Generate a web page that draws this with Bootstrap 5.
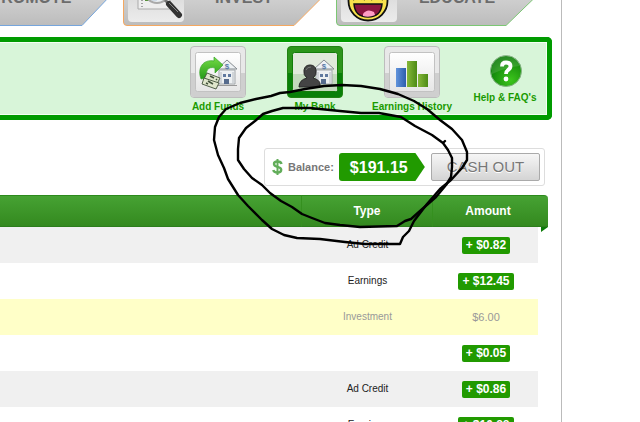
<!DOCTYPE html>
<html lang="en">
<head>
<meta charset="utf-8">
<meta name="viewport" content="width=device-width, initial-scale=1">
<title>My Bank</title>
<link href="https://cdn.jsdelivr.net/npm/bootstrap@5.3.0/dist/css/bootstrap.min.css" rel="stylesheet">
<script src="https://cdn.jsdelivr.net/npm/bootstrap@5.3.0/dist/js/bootstrap.bundle.min.js" defer></script>
<style>
body{font-family:"Liberation Sans",Arial,sans-serif;font-size:10px;color:#222;background:#fff;overflow:hidden}
a{text-decoration:none}
.page-wrap{margin-right:78px;border-right:1px solid #bbb;min-height:100vh;padding-right:9px;overflow:hidden}
.tabs-strip{height:26px;gap:12px;padding-right:15px;overflow:hidden}
.main-tab{flex:none;width:201px;height:60px;padding:0 20px 4px 5px;position:relative;color:#6c6c6c;font-size:16px;font-weight:700;line-height:20px}
.tab-shape{position:absolute;left:0;top:0;width:100%;height:100%}
.tab-pic{position:relative;width:56px;height:52px;border-radius:4px;background:linear-gradient(#ccc,#ececec);overflow:hidden}
.tab-text{position:relative;margin-bottom:14px}
.tool-panel{margin-top:11px;height:83px;border:5px solid #009b00;border-left:0;border-radius:0 5px 5px 0;background:#d8f5d9;box-shadow:inset -1px 1px #f4fff4,inset 0 -1px #f4fff4;padding-top:4px;gap:5px}
.tool-link{flex:none;width:92px;color:#1a9a00;font-weight:700;line-height:12px;text-align:center;white-space:nowrap}
.tool-link:last-child{width:84px;padding-top:8px}
.tool-link:last-child svg{margin-bottom:4px}
.tool-link svg{display:block;margin:0 auto 3px}
.balance-box{width:281px;margin:28px 7px 9px auto;height:38px;border:1px solid #ddd;border-radius:3px;padding:0 4px 0 7px}
.balance-name{font-size:11px;font-weight:700;color:#777;margin:0 5px}
.balance-tag{width:86px;height:28px;padding-left:11px;background:#219a00;color:#fff;font-size:16px;font-weight:700;line-height:29px;border-radius:3px;clip-path:polygon(0 0,89% 0,100% 50%,89% 100%,0 100%)}
.cash-btn{width:109px;height:28px;padding:0;border:1px solid #aaa;border-radius:2px;background:linear-gradient(#f6f6f6,#d4d4d4);color:#777;font-size:15px;line-height:26px;text-shadow:0 1px #fff}
.ledger-wrap{position:relative;margin-right:4px}
.ledger-wrap::after{content:"";position:absolute;right:0;top:32px;width:7px;height:5px;background:#0b7a08;clip-path:polygon(0 0,100% 0,0 100%)}
.ledger{width:100%;table-layout:fixed;border-collapse:separate;border-spacing:0;text-align:center}
.ledger th{height:32px;background:linear-gradient(#46a233,#34891f);border-top:1px solid #2c8a1c;border-bottom:1px solid #2c7d1c;color:#fff;font-size:12px;padding:0;vertical-align:middle}
.ledger th+th{border-left:1px solid #35901f}
.ledger th:last-child{border-top-right-radius:4px;padding-right:5px}
.ledger td{height:36px;padding:0 0 0 2px;line-height:14px;vertical-align:middle}
.ledger .shade td:not(:last-child){background:#f0f0f0}
.ledger .pending td:not(:last-child){background:#ffffc8;color:#999}
.ledger .pending td:nth-child(3){font-size:11px}
.col-kind{width:131px}.col-sum{width:106px}.col-edge{width:10px}
.sum-tag{display:inline-block;padding:0 4px;background:#219a00;color:#fff;border-radius:2px;font-size:12px;font-weight:700;line-height:17px}
.pen-mark{position:absolute;right:170px;top:80px;pointer-events:none}
</style>
</head>
<body>
<div class="page-wrap">
<nav class="tabs-strip d-flex justify-content-end align-items-end">
  <a href="#" class="main-tab d-flex align-items-end">
    <svg class="tab-shape" viewBox="0 0 201 60"><defs><linearGradient id="tg" x1="0" y1="0" x2="0" y2="1"><stop offset="0" stop-color="#ddd"/><stop offset=".55" stop-color="#cfcfcf"/><stop offset="1" stop-color="#bcbcbc"/></linearGradient></defs><path d="M.5.5H200.5V29.500L172 59.500H4Q.5 59.500.5 56Z" fill="url(#tg)" stroke="#76a5dc"/></svg>
    <span class="tab-pic"></span><span class="tab-text flex-fill text-center">PROMOTE</span></a>
  <a href="#" class="main-tab d-flex align-items-end">
    <svg class="tab-shape" viewBox="0 0 201 60"><path d="M.5.5H200.500V30L171 59.500H4Q.5 59.500.5 56Z" fill="url(#tg)" stroke="#f5a860"/></svg>
    <span class="tab-pic"><svg width="56" height="52" viewBox="0 0 56 52"><path d="M10 8H42V39H10Z" fill="#eee" stroke="#aaa"/><path d="M14 30v8" stroke="#555" stroke-dasharray="1 2"/><path d="M17 28h6v3h-6Z" fill="#57903a"/><path d="M24 25h5v6h-5Z" fill="#476fa8"/><circle cx="29" cy="21" r="12" fill="#e9eef2" fill-opacity=".85" stroke="#aaa" stroke-width="2"/><path d="M37 30l4 4" stroke="#777" stroke-width="3"/><path d="M41 34L51 45" stroke="#333" stroke-width="6" stroke-linecap="round"/><path d="M41 33L50 42" stroke="#888" stroke-width="1"/></svg></span><span class="tab-text flex-fill text-center">INVEST</span></a>
  <a href="#" class="main-tab d-flex align-items-end">
    <svg class="tab-shape" viewBox="0 0 201 60"><path d="M.5.5H200.500V30L170 59.500H4Q.5 59.500.5 56Z" fill="url(#tg)" stroke="#7cc774"/></svg>
    <span class="tab-pic"><svg width="56" height="52" viewBox="0 0 56 52"><circle cx="27" cy="31" r="19.500" fill="#f7e04b" stroke="#111" stroke-width="1.800"/><path d="M12 30q6-4 12 0M30 30q6-4 12 0" fill="none" stroke="#111" stroke-width="1.500"/><path d="M13 34H41Q40 47 27 47Q14 47 13 34Z" fill="#8c1540" stroke="#111" stroke-width="1.500"/><path d="M22 44Q26 38 33 42L34 45Q28 48 22 46Z" fill="#ff9dc4"/></svg></span><span class="tab-text flex-fill text-center">EDUCATE</span></a>
</nav>

<nav class="tool-panel d-flex justify-content-end">
  <a href="#" class="tool-link"><svg width="56" height="52" viewBox="0 0 56 52">
    <defs><linearGradient id="wg" x1="0" y1="0" x2="0" y2="1"><stop offset="0" stop-color="#fff"/><stop offset="1" stop-color="#e6e6e6"/></linearGradient>
    <linearGradient id="gg" x1="0" y1="0" x2="0" y2="1"><stop offset="0" stop-color="#75dc46"/><stop offset="1" stop-color="#259a18"/></linearGradient>
    <g id="bank"><path d="M27 23L37 14L47 23Z" fill="#eef1f4" stroke="#858b90"/><path d="M29 24H45V38H29Z" fill="#edf0f2" stroke="#a1a6aa"/><path d="M31 26v11M43 26v11" stroke="#b5bac0"/><path d="M33 28h3v3h-3ZM38 28h3v3h-3Z" fill="#60799f"/><path d="M34 33h5v5h-5Z" fill="#566b8d"/><path d="M27 39.500H47" stroke="#999"/><text x="37" y="23" font-size="8" font-weight="700" text-anchor="middle" fill="#5a7ba8">$</text></g></defs>
    <rect x=".5" y=".5" width="55" height="51" rx="3.500" fill="#e8e8e8" stroke="#bdbdbd"/><path d="M1 27H55V48Q55 51 52 51H4Q1 51 1 48Z" fill="#cfcfcf"/><rect x="5.500" y="6.500" width="45" height="39" rx="2" fill="url(#wg)" stroke="#c2c2c2"/><use href="#bank"/>
    <path d="M11 33C7 22 13 13 24 15L24 11L33 19L25 27V22C18 20 15 25 17 32Z" fill="url(#gg)" stroke="#35a526" stroke-width=".7"/>
    <g stroke="#42513b" stroke-width=".9" fill="#dfe6cc"><path d="M17 27L30 32L27 38L14 33Z"/><path d="M14 32L29 37L26 43L12 38Z"/></g><path d="M20 30l4 2M18 35l5 3M16 37l2 1M26 33l1 1" stroke="#42513b" stroke-width="1.500"/></svg>Add Funds</a>
  <a href="#" class="tool-link"><svg width="56" height="52" viewBox="0 0 56 52">
    <rect x=".5" y=".5" width="55" height="51" rx="3.500" fill="#2c951b" stroke="#218213"/><path d="M1 27H55V48Q55 51 52 51H4Q1 51 1 48Z" fill="#087f08"/><rect x="5.500" y="6.500" width="45" height="39" rx="2" fill="#e0eadb" stroke="#137c0a"/><path d="M6 28H50V45H6Z" fill="#c3dabd"/><use href="#bank"/>
    <path d="M12 41Q12 34 20 32Q16 29 17 24Q18 19 23 19Q28 19 29 24Q30 29 26 32Q33 34 33 38V41Z" fill="#444" stroke="#292929"/><path d="M19 24Q20 21 24 21" fill="none" stroke="#777"/></svg>My Bank</a>
  <a href="#" class="tool-link"><svg width="56" height="52" viewBox="0 0 56 52">
    <defs><linearGradient id="bg1"><stop offset="0" stop-color="#6294dc"/><stop offset="1" stop-color="#2d5ead"/></linearGradient><linearGradient id="bg2"><stop offset="0" stop-color="#86b83a"/><stop offset="1" stop-color="#4d8b15"/></linearGradient></defs>
    <rect x=".5" y=".5" width="55" height="51" rx="3.500" fill="#e8e8e8" stroke="#bdbdbd"/><path d="M1 27H55V48Q55 51 52 51H4Q1 51 1 48Z" fill="#cfcfcf"/><rect x="5.500" y="6.500" width="45" height="39" rx="2" fill="url(#wg)" stroke="#c2c2c2"/>
    <path d="M12 22h10v19H12Z" fill="url(#bg1)"/><path d="M23 15h10v26H23Z" fill="url(#bg2)"/><path d="M34 28h10v13H34Z" fill="url(#bg2)"/></svg>Earnings History</a>
  <a href="#" class="tool-link"><svg width="34" height="34" viewBox="0 0 34 34">
    <defs><radialGradient id="hg" cx=".65" cy=".8" r=".75"><stop offset="0" stop-color="#3cc51c"/><stop offset="1" stop-color="#0c7d08"/></radialGradient></defs>
    <circle cx="18" cy="17" r="15.500" fill="url(#hg)" stroke="#86b386"/><path d="M4 16A14 14 0 0 1 32 12Q18 13 4 20Z" fill="#fff" fill-opacity=".12"/><path d="M14 12.500Q14 8.500 18 8.500Q22.500 8.500 22.500 12Q22.500 14.500 20 16Q18 17.500 18 20" fill="none" stroke="#fff" stroke-width="3.800"/><circle cx="18" cy="25" r="2.400" fill="#fff"/></svg>Help &amp; FAQ's</a>
</nav>

<section class="balance-box d-flex align-items-center">
  <svg width="11" height="16" viewBox="0 0 11 16"><path d="M5.500 0V16" stroke="#62ad5a" stroke-width="2"/><path d="M9.500 5Q9 2.500 5.500 2.500Q2 2.500 2 5Q2 7 5.500 7.800Q9.200 8.700 9.200 10.800Q9.200 13.500 5.500 13.500Q1.800 13.500 1.300 11" fill="none" stroke="#62ad5a" stroke-width="2.400"/></svg>
  <span class="balance-name">Balance:</span>
  <span class="balance-tag">$191.15</span>
  <button type="button" class="btn cash-btn ms-auto">CASH OUT</button>
</section>

<div class="ledger-wrap">
<table class="ledger">
  <colgroup><col><col class="col-kind"><col class="col-sum"><col class="col-edge"></colgroup>
  <thead><tr><th></th><th scope="col">Type</th><th scope="col" colspan="2">Amount</th></tr></thead>
  <tbody>
    <tr class="shade"><td></td><td>Ad Credit</td><td><span class="sum-tag">+ $0.82</span></td><td></td></tr>
    <tr><td></td><td>Earnings</td><td><span class="sum-tag">+ $12.45</span></td><td></td></tr>
    <tr class="pending"><td></td><td>Investment</td><td>$6.00</td><td></td></tr>
    <tr><td></td><td></td><td><span class="sum-tag">+ $0.05</span></td><td></td></tr>
    <tr class="shade"><td></td><td>Ad Credit</td><td><span class="sum-tag">+ $0.86</span></td><td></td></tr>
    <tr><td></td><td>Earnings</td><td><span class="sum-tag">+ $10.88</span></td><td></td></tr>
  </tbody>
</table>
</div>
</div>
<svg class="pen-mark" width="260" height="170" viewBox="210 80 260 170" fill="none" stroke="#000" stroke-width="2.400" stroke-linejoin="round" stroke-linecap="round">
<path d="M445 141L443 143L432 135L415 126L401 117L379 113L361 113L340 111L310 108H283L272 111L263 114L255 121L246 128L239 138L238 149V160L244 169L252 178L262 185L270 193L281 201L292 207L302 214L312 218L325 223L340 225L360 227L397 226L405 221L411 219L420 211L436 197L446 185L451 177L452 167V158L448 150L443 143"/>
<path d="M365 244H400L403 237L409 231L414 221L427 204L440 189L451 180L462 168L467 160V152L462 140L452 129L440 120L427 109L414 101L398 94L380 89L361 86L342 85L324 86L305 89L290 92L280 93L271 96L256 99L240 103L226 109L219 117L215 127L214 140L218 155L224 168L228 179L238 195L248 206L262 220L272 229L284 235L297 238L320 239L345 242L365 244Z"/>
</svg>
</body>
</html>
